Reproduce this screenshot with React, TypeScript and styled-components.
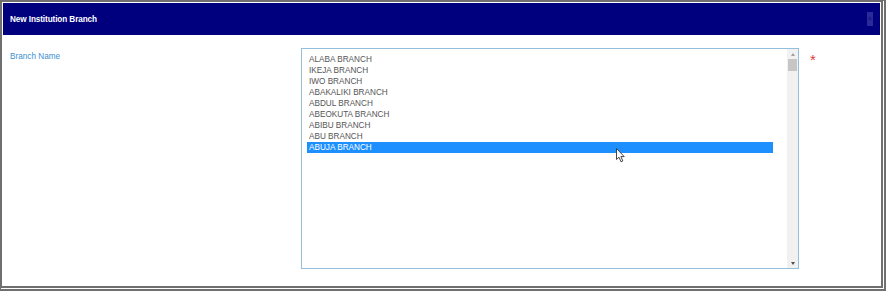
import React from "react";
import styled, { createGlobalStyle } from "styled-components";

const Global = createGlobalStyle`
  html, body { margin: 0; padding: 0; background: #fff; }
  body { font-family: "Liberation Sans", Arial, sans-serif; }
`;

const Frame = styled.div`
  box-sizing: border-box;
  width: 886px;
  height: 291px;
  border-style: solid double double solid;
  border-color: #6f6f6f;
  border-width: 2px 5px 5px 2px;
  padding: 1px;
  background: #fff;
  display: flex;
  flex-direction: column;
`;

const Header = styled.div`
  height: 32px;
  background: #00007f;
  display: flex;
  align-items: center;
  justify-content: space-between;
  padding: 0 7px 0 7px;
  flex-shrink: 0;
`;

const Title = styled.div`
  color: #fff;
  font-size: 8.2px;
  font-weight: bold;
  letter-spacing: -0.1px;
`;

const Close = styled.div`
  width: 6px;
  height: 14px;
  background: #2a2a9a;
  color: #111166;
  font-size: 7px;
  line-height: 14px;
  text-align: center;
`;

const Body = styled.div`
  flex: 1;
  display: flex;
  align-items: flex-start;
  padding: 13px 0 0 7px;
`;

const Label = styled.div`
  width: 291px;
  font-size: 8.2px;
  color: #3c8fd0;
  padding-top: 4px;
`;

const ListBox = styled.div`
  position: relative;
  box-sizing: border-box;
  width: 498px;
  height: 221px;
  border: 1px solid #93bfdc;
  display: flex;
  justify-content: space-between;
`;

const Rows = styled.div`
  width: 466px;
  padding: 5px 0 0 5px;
  display: flex;
  flex-direction: column;
`;

const Row = styled.div<{ $selected?: boolean }>`
  height: 11px;
  line-height: 11px;
  font-size: 8.2px;
  padding-left: 2px;
  color: ${(p) => (p.$selected ? "#fff" : "#555")};
  background: ${(p) => (p.$selected ? "#1e8fff" : "transparent")};
`;

const ScrollBar = styled.div`
  width: 11px;
  background: #f1f1f1;
  display: flex;
  flex-direction: column;
  align-items: center;
  padding: 4px 0 3px;
  box-sizing: border-box;
`;

const Arrow = styled.div<{ $down?: boolean }>`
  width: 0;
  height: 0;
  border-left: 2.5px solid transparent;
  border-right: 2.5px solid transparent;
  ${(p) =>
    p.$down
      ? "border-top: 3px solid #505050; margin-top: auto;"
      : "border-bottom: 3px solid #a0a0a0;"}
`;

const Thumb = styled.div`
  width: 9px;
  height: 12px;
  background: #c6c6c6;
  margin-top: 3px;
`;

const Required = styled.div`
  color: #e03a3a;
  font-size: 15px;
  margin-left: 11px;
  line-height: 15px;
  padding-top: 4px;
`;

const Cursor = styled.svg`
  position: absolute;
  left: 314px;
  top: 99px;
`;

const branches = [
  "ALABA BRANCH",
  "IKEJA BRANCH",
  "IWO BRANCH",
  "ABAKALIKI BRANCH",
  "ABDUL BRANCH",
  "ABEOKUTA BRANCH",
  "ABIBU BRANCH",
  "ABU BRANCH",
  "ABUJA BRANCH",
];

export default function App() {
  return (
    <>
      <Global />
      <Frame>
        <Header>
          <Title>New Institution Branch</Title>
          <Close>×</Close>
        </Header>
        <Body>
          <Label>Branch Name</Label>
          <ListBox role="listbox">
            <Rows>
              {branches.map((b) => (
                <Row key={b} $selected={b === "ABUJA BRANCH"}>
                  {b}
                </Row>
              ))}
            </Rows>
            <ScrollBar>
              <Arrow />
              <Thumb />
              <Arrow $down />
            </ScrollBar>
            <Cursor width="10" height="15" viewBox="0 0 10 15">
              <path
                d="M0.5 0.5 L0.5 11.5 L3 9.2 L5 13.8 L6.8 13 L4.9 8.6 L8.2 8.6 Z"
                fill="#fff"
                stroke="#333"
                strokeWidth="0.9"
              />
            </Cursor>
          </ListBox>
          <Required>*</Required>
        </Body>
      </Frame>
    </>
  );
}
